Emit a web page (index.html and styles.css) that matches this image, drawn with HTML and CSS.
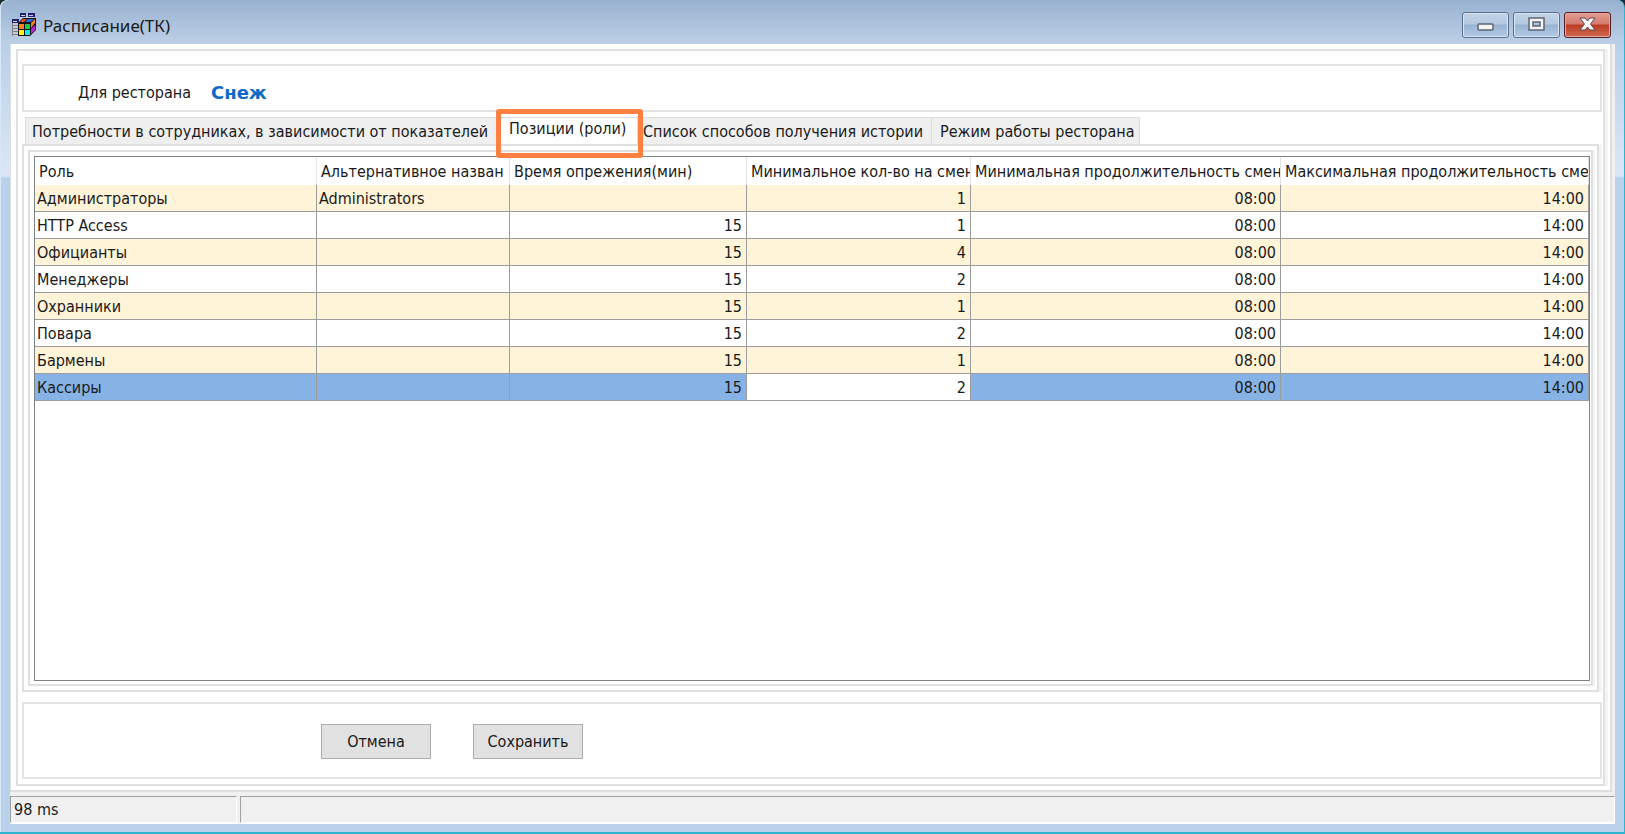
FILE: index.html
```html
<!DOCTYPE html>
<html lang="ru">
<head>
<meta charset="utf-8">
<title>Расписание(ТК)</title>
<link rel="stylesheet" href="styles.css">
</head>
<body>
<div class="window">
  <header class="titlebar">
    <svg class="app-icon" width="24" height="24" viewBox="0 0 24 24" aria-hidden="true">
      <path fill="#c4cde0" d="M8 1h14v5H8zM1 7h7v16H1z"/>
      <path fill="#20206c" d="M8 0h6v4H8zM16 0h7v4h-7zM0 6h7v4H0z"/>
      <path fill="#c8d4ee" d="M9 2h4v1H9zM17 2h4v1h-4zM1 8h4v1H1z"/>
      <path fill="#808080" d="M1 12h5v1H1zM1 15h5v1H1zM1 18h5v1H1zM1 21h5v1H1zM0 10h1v13H0z"/>
      <path fill="#111" d="M6 10l5-5h13v12l-6 6H6z"/>
      <path fill="#f04c28" d="M8 9l3-3h4l-3 3z"/>
      <path fill="#2468e0" d="M13 9l3-3h6l-3 3z"/>
      <path fill="#ff7d1a" d="M7 11h5v5H7z"/>
      <path fill="#20c840" d="M13 11h5v5h-5z"/>
      <path fill="#ffee20" d="M7 17h5v5H7z"/>
      <path fill="#18e4f0" d="M13 17h5v5h-5z"/>
      <path fill="#f08020" d="M19 10l4-4v4l-4 5z"/>
      <path fill="#c020d8" d="M19 16l4-4v5l-4 4z"/>
    </svg>
    <h1 class="title">Расписание(ТК)</h1>
    <div class="controls">
      <button class="control" type="button" aria-label="Свернуть">
        <svg width="20" height="16" viewBox="0 0 20 16"><rect x="2" y="7" width="15" height="6" rx="1" fill="#f4f4f4" stroke="#5c6674" stroke-width="1.500"/></svg>
      </button>
      <button class="control" type="button" aria-label="Развернуть">
        <svg width="20" height="16" viewBox="0 0 20 16"><path fill="#f4f4f4" fill-rule="evenodd" stroke="#5c6674" stroke-width="1.500" d="M2 1h15v12H2zM6 5h7v4H6z"/></svg>
      </button>
      <button class="control control-close" type="button" aria-label="Закрыть">
        <svg width="20" height="16" viewBox="0 0 20 16"><path fill="#f6f6f6" stroke="#5a4a56" d="M2 1h5l2.500 3L12 1h5l-4.500 6 4.500 6h-5l-2.500-3L7 13H2l4.500-6z"/></svg>
      </button>
    </div>
  </header>

  <main class="client">
    <div class="frame">
      <section class="restaurant">
        <span>Для ресторана</span>
        <strong class="restaurant-name">Снеж</strong>
      </section>

      <div class="tabs" role="tablist">
        <button class="tab tab-needs" type="button" role="tab">Потребности в сотрудниках, в зависимости от показателей</button>
        <button class="tab tab-active" type="button" role="tab" aria-selected="true">Позиции (роли)<span class="highlight"></span></button>
        <button class="tab tab-history" type="button" role="tab">Список способов получения истории</button>
        <button class="tab tab-hours" type="button" role="tab">Режим работы ресторана</button>
      </div>

      <div class="page" role="tabpanel">
        <div class="page-inner">
          <div class="grid">
            <table class="roles">
              <colgroup><col class="col-role"><col class="col-alt"><col class="col-time"><col class="col-count"><col class="col-min"><col></colgroup>
              <thead>
                <tr><th><span>Роль</span></th><th><span>Альтернативное назван</span></th><th><span>Время опрежения(мин)</span></th><th><span>Минимальное кол-во на смен</span></th><th><span>Минимальная продолжительность смен</span></th><th><span>Максимальная продолжительность сме</span></th></tr>
              </thead>
              <tbody>
                <tr><td>Администраторы</td><td>Administrators</td><td></td><td>1</td><td>08:00</td><td>14:00</td></tr>
                <tr><td>HTTP Access</td><td></td><td>15</td><td>1</td><td>08:00</td><td>14:00</td></tr>
                <tr><td>Официанты</td><td></td><td>15</td><td>4</td><td>08:00</td><td>14:00</td></tr>
                <tr><td>Менеджеры</td><td></td><td>15</td><td>2</td><td>08:00</td><td>14:00</td></tr>
                <tr><td>Охранники</td><td></td><td>15</td><td>1</td><td>08:00</td><td>14:00</td></tr>
                <tr><td>Повара</td><td></td><td>15</td><td>2</td><td>08:00</td><td>14:00</td></tr>
                <tr><td>Бармены</td><td></td><td>15</td><td>1</td><td>08:00</td><td>14:00</td></tr>
                <tr class="selected"><td>Кассиры</td><td></td><td>15</td><td class="editing">2</td><td>08:00</td><td>14:00</td></tr>
              </tbody>
            </table>
          </div>
        </div>
      </div>

      <section class="actions">
        <button class="action" type="button">Отмена</button>
        <button class="action" type="button">Сохранить</button>
      </section>
    </div>
  </main>

  <footer class="statusbar">
    <div class="status status-time">98 ms</div>
    <div class="status status-message"></div>
  </footer>
</div>
</body>
</html>
```
FILE: styles.css
```css
* {
  box-sizing: border-box;
}

body {
  margin: 0;
  background: #1c2a33;
  color: #1a1a1a;
  font-family: "DejaVu Sans Condensed", "DejaVu Sans", sans-serif;
  font-size: 16px;
  line-height: 18px;
}

button {
  margin: 0;
  color: inherit;
  font: inherit;
}

.window {
  display: flex;
  flex-direction: column;
  min-height: 100vh;
  padding: 0 9px 8px 10px;
  border: solid #2fb4cf;
  border-width: 0 1px 2px 0;
  border-radius: 8px 8px 0 0;
  background:
    linear-gradient(#98b2d0, #bccfe6 44px, transparent 44px),
    linear-gradient(#b9cfe9 44px, #dbe7f6 176px, #b9d1ea 178px);
  box-shadow: inset 1px 0 #d9e8f8;
}

.titlebar {
  display: flex;
  align-items: flex-start;
  height: 44px;
  padding: 12px 4px 0 2px;
}

.app-icon {
  margin-top: 1px;
}

.title {
  flex: 1;
  margin: 2px 0 0 7px;
  font: 17px/24px "Noto Sans", sans-serif;
}

.controls {
  display: flex;
  gap: 4px;
}

.control {
  display: flex;
  align-items: center;
  justify-content: center;
  width: 47px;
  height: 26px;
  padding: 0;
  border: 1px solid #5b708c;
  border-radius: 3px;
  background: linear-gradient(#c2d3e8, #b3c8e0 46%, #98b3d2 50%, #b4cbe5);
  box-shadow: inset 0 0 0 1px #d8e4f2;
}

.control-close {
  border-color: #571b27;
  background: linear-gradient(#e39c90, #d37a6c 46%, #bc3a22 50%, #cf6a50);
  box-shadow: inset 0 0 0 1px #e7aaa0;
}

.client {
  display: flex;
  flex: 1;
  margin-right: 3px;
  padding: 5px 5px 4px;
  border: solid #dedede;
  border-width: 0 2px 2px 1px;
  background: #fff;
  box-shadow: 3px 0 #f0f0f0;
}

.frame {
  display: flex;
  flex: 1;
  flex-direction: column;
  min-width: 0;
  padding: 13px 1px 5px 4px;
  border: 2px solid #e0e0e0;
  box-shadow: 3px 0 #f4f4f4;
}

.restaurant {
  display: flex;
  align-items: center;
  gap: 20px;
  height: 48px;
  padding: 10px 0 0 54px;
  border: 2px solid #e4e4e4;
}

.restaurant-name {
  color: #0d6ac8;
  font: bold 18px/20px "DejaVu Sans", sans-serif;
}

.tabs {
  display: flex;
  height: 32px;
  padding: 5px 0 0 3px;
}

.tab {
  padding: 2px 0 0;
  border: solid #dcdcdc;
  border-width: 1px 1px 0 0;
  background: #efefef;
  text-align: left;
  white-space: nowrap;
}

.tab-needs {
  width: 473px;
  padding-left: 6px;
  border-left-width: 1px;
}

.tab-active {
  position: relative;
  width: 140px;
  padding: 0 0 4px 11px;
  background: #fff;
}

.highlight {
  position: absolute;
  inset: -9px -6px -14px -2px;
  border: 5px solid #ff8040;
  border-radius: 3px;
}

.tab-history {
  width: 294px;
  padding-left: 5px;
}

.tab-hours {
  width: 208px;
  padding-left: 8px;
}

.page {
  display: flex;
  flex: 1;
  margin-right: 3px;
  padding: 4px;
  border: 2px solid #e0e0e0;
  box-shadow: 3px 0 #f4f4f4;
}

.page-inner {
  display: flex;
  flex: 1;
  min-width: 0;
  padding: 4px 1px 3px 4px;
  border: 2px solid #e0e0e0;
  box-shadow: 2px 0 #f4f4f4;
}

.grid {
  flex: 1;
  min-width: 0;
  border: 1px solid #7c8288;
}

.roles {
  width: 100%;
  border-collapse: separate;
  border-spacing: 0;
  table-layout: fixed;
}

.col-role {
  width: 282px;
}

.col-alt {
  width: 193px;
}

.col-time {
  width: 237px;
}

.col-count {
  width: 224px;
}

.col-min {
  width: 310px;
}

.roles th {
  height: 28px;
  padding: 2px 0 0 4px;
  border-right: 1px solid #e2e2e2;
  font-weight: normal;
  text-align: left;
  white-space: nowrap;
}

.roles th span {
  display: block;
  overflow: hidden;
}

.roles td {
  height: 27px;
  padding: 2px 4px 0 2px;
  border: solid #9c9c9c;
  border-width: 0 1px 1px 0;
  text-align: right;
}

.roles td:nth-child(-n+2) {
  text-align: left;
}

.roles tbody tr:nth-child(odd) {
  background: #fff3d8;
}

.roles tbody .selected {
  background: #87b2e6;
}

.roles .editing {
  background: #fff;
}

.actions {
  display: flex;
  gap: 42px;
  margin-top: 10px;
  padding: 20px 0 18px 297px;
  border: 2px solid #e4e4e4;
}

.action {
  width: 110px;
  height: 35px;
  padding: 0;
  border: 1px solid #adadad;
  background: #e1e1e1;
}

.statusbar {
  display: flex;
  gap: 3px;
  padding-top: 4px;
  border-bottom: 1px solid #fff;
  background: #f0f0f0;
}

.status {
  height: 27px;
  padding: 4px 3px;
  border: solid;
  border-width: 1px;
  border-color: #a0a0a0 #fff #fff #a0a0a0;
}

.status-time {
  width: 227px;
}

.status-message {
  flex: 1;
}
```
